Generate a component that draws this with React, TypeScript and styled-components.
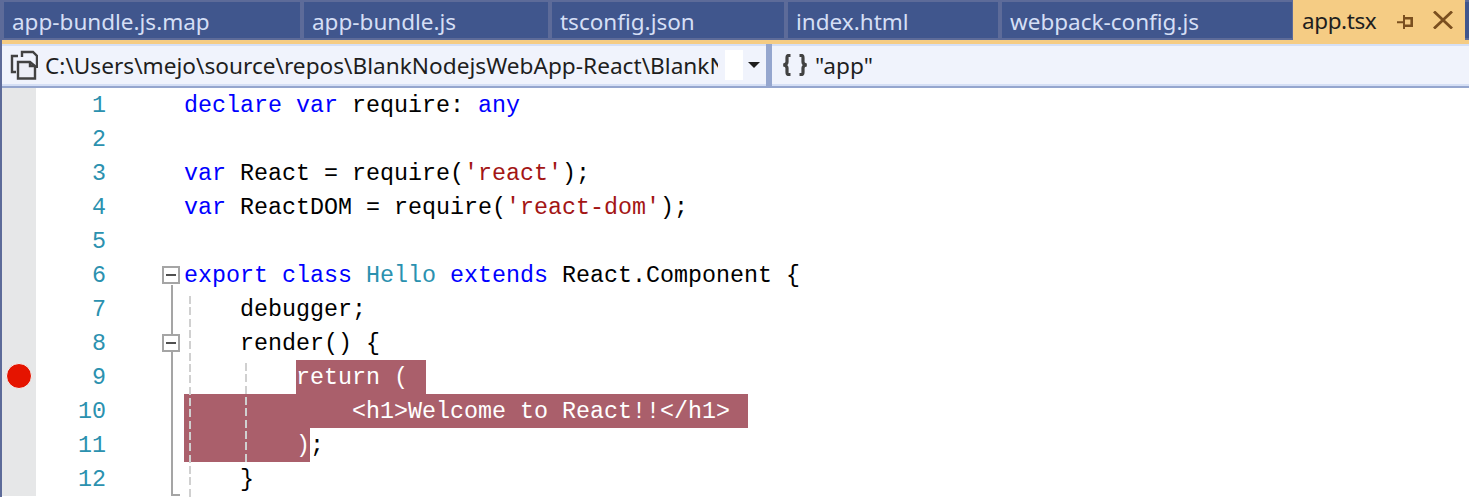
import React from 'react';
import styled, { createGlobalStyle } from 'styled-components';

const Global = createGlobalStyle`
  html, body { margin: 0; padding: 0; background: #fff; overflow: hidden; }
`;

const Page = styled.div`
  width: 1469px;
  height: 497px;
  overflow: hidden;
  display: flex;
  flex-direction: column;
  background: #5d6b99;
`;

const TabBar = styled.div`
  display: flex;
  align-items: stretch;
  height: 40px;
  flex: none;
  padding-left: 4px;
  gap: 4px;
`;

const Tab = styled.div<{ $w: number }>`
  width: ${p => p.$w}px;
  box-sizing: border-box;
  margin: 2px 0;
  padding: 4px 0 0 8px;
  background: #40568d;
  color: #d5dff5;
  font: 22.5px/32px "Noto Sans", sans-serif;
  white-space: nowrap;
`;

const ActiveTab = styled.div`
  width: 172px;
  margin-left: -3px;
  box-sizing: border-box;
  padding: 0 0 0 9px;
  background: #f5cc84;
  color: #1e1e1e;
  display: flex;
  align-items: center;
  letter-spacing: -0.4px;
  font: 22.5px/45px "Noto Sans", sans-serif;
`;

const TabIcons = styled.div`
  display: flex;
  align-items: center;
  margin-left: 21px;
  gap: 18px;
  height: 40px;
`;

const TabEnd = styled.div`
  flex: 1;
  margin: 2px 0 2px -4px;
  background: #40568d;
`;

const GoldLine = styled.div`
  height: 4px;
  flex: none;
  margin-left: 2px;
  background: #f5cc84;
`;

const NavBar = styled.div`
  height: 44px;
  flex: none;
  display: flex;
  box-sizing: border-box;
  background: #f0f3fc;
  box-shadow: inset 0 2px 0 #d5dff5, inset 0 -2px 0 #d5dff5;
  border-bottom: 2px solid #95a6ce;
  color: #1e1e1e;
  font: 22.65px/40px "Noto Sans", sans-serif;
  margin-left: 2px;
`;

const NavLeft = styled.div`
  width: 764px;
  display: flex;
  align-items: center;
  flex: none;
  border-right: 6px solid #95a6ce;
`;

const NavIconBox = styled.div`
  width: 43px;
  flex: none;
  display: flex;
  padding-left: 8px;
  box-sizing: border-box;
`;

const PathText = styled.div`
  width: 673px;
  padding-top: 2px;
  overflow: hidden;
  white-space: nowrap;
  flex: none;
`;

const WhiteGap = styled.div`
  width: 18px;
  height: 30px;
  background: #fff;
  margin-left: 7px;
  flex: none;
`;

const Caret = styled.div`
  margin-left: 5px;
  flex: none;
  width: 0;
  height: 0;
  border-left: 6px solid transparent;
  border-right: 6px solid transparent;
  border-top: 6px solid #1e1e1e;
`;

const NavRight = styled.div`
  flex: 1;
  display: flex;
  align-items: center;
  padding-left: 10px;
  gap: 7px;
`;

const SymbolText = styled.span`
  padding-top: 2px;
`;

const Editor = styled.div`
  flex: 1;
  position: relative;
  background: #fff;
  border-left: 2px solid #5d6b99;
  overflow: hidden;
`;

const Row = styled.div`
  display: flex;
  height: 34px;
`;

const Glyph = styled.div`
  width: 34px;
  flex: none;
  background: #e6e7e8;
  display: flex;
  align-items: center;
  justify-content: center;
`;

const Breakpoint = styled.div`
  width: 26px;
  height: 26px;
  margin-bottom: 3px;
  box-sizing: border-box;
  border-radius: 50%;
  background: #e51400;
  border: 1.5px solid #f5f5f5;
`;

const Num = styled.div`
  width: 70px;
  flex: none;
  text-align: right;
  color: #2b91af;
  font: 23.33px/36px "Liberation Mono", monospace;
`;

const FoldCell = styled.div<{ $top: boolean; $bottom: boolean }>`
  width: 78px;
  flex: none;
  position: relative;
  &::before {
    content: '';
    display: ${p => (p.$top ? 'block' : 'none')};
    position: absolute;
    left: 65px;
    top: 0;
    height: ${p => (p.$bottom ? '34px' : '32px')};
    width: 2px;
    background: #a5a5a5;
  }
  &::after {
    content: '';
    display: ${p => (p.$bottom ? 'block' : 'none')};
    position: absolute;
    left: 65px;
    top: 27px;
    height: 7px;
    width: 2px;
    background: #a5a5a5;
  }
`;

const FoldBox = styled.div`
  position: absolute;
  left: 56px;
  top: 8px;
  width: 18px;
  height: 18px;
  box-sizing: border-box;
  border: 2px solid #a5a5a5;
  background: #fff;
  display: flex;
  align-items: center;
  justify-content: center;
  z-index: 1;
  &::before {
    content: '';
    width: 10px;
    height: 2px;
    background: #505050;
  }
`;

const FoldTick = styled.div`
  position: absolute;
  left: 65px;
  top: 32px;
  width: 9px;
  height: 2px;
  background: #a5a5a5;
`;

const Code = styled.div`
  flex: 1;
  white-space: pre;
  color: #000;
  font: 23.33px/36px "Liberation Mono", monospace;
`;

const Kw = styled.span`color: #0000ff;`;
const Type = styled.span`color: #2b91af;`;
const Str = styled.span`color: #a31515;`;
const Hl = styled.span<{ $pad: number }>`
  display: inline-block;
  height: 34px;
  vertical-align: top;
  background: #aa5f6b;
  color: #fff;
  padding-right: ${p => p.$pad}px;
`;

const Guide = styled.div<{ $x: number; $top: number; $h: number }>`
  position: absolute;
  left: ${p => p.$x}px;
  top: ${p => p.$top}px;
  height: ${p => p.$h}px;
  width: 2px;
  background-image: repeating-linear-gradient(to bottom, #d0d0d0 0 8px, transparent 8px 11.33px);
`;

const PinIcon = () => (
  <svg width="18" height="18" viewBox="0 0 18 18" style={{ display: 'block' }}>
    <path d="M0 11.3H6M7 4V18" stroke="#7a4f1f" strokeWidth="2" fill="none" />
    <path d="M7 7.3H14.7V14.7H7" stroke="#7a4f1f" strokeWidth="2.6" fill="none" />
  </svg>
);

const CloseIcon = () => (
  <svg width="20" height="18" viewBox="0 0 20 18" style={{ display: 'block' }}>
    <path d="M1 0.5L19 17.5M19 0.5L1 17.5" stroke="#7a4f1f" strokeWidth="2.8" fill="none" />
  </svg>
);

const DocIcon = () => (
  <svg width="28" height="30" viewBox="0 0 28 30" fill="none" stroke="#424242" strokeWidth="2.4" style={{ display: 'block' }}>
    <path d="M8 6H2V22H6" />
    <path d="M12 7V2H23L27 6V18" />
    <path d="M8 12H20L25 16V28.5H8Z" fill="#eceef6" />
    <path d="M20 12V16H25" />
  </svg>
);

const Braces = () => (
  <svg width="26" height="22" viewBox="0 0 26 22" fill="none" stroke="#424242" strokeWidth="3.2" style={{ display: 'block' }}>
    <path d="M8.5 1.5H6.5C5 1.5 5 2.5 5 4V8C5 9.5 4 10.5 1.5 11C4 11.5 5 12.5 5 14V18C5 19.5 5 20.5 6.5 20.5H8.5" />
    <path d="M17.5 1.5H19.5C21 1.5 21 2.5 21 4V8C21 9.5 22 10.5 24.5 11C22 11.5 21 12.5 21 14V18C21 19.5 21 20.5 19.5 20.5H17.5" />
  </svg>
);

type LineDef = {
  n: number;
  fold?: 'open' | 'line' | 'nested' | 'end';
  bp?: boolean;
  code: React.ReactNode;
};

const lines: LineDef[] = [
  { n: 1, code: <><Kw>declare</Kw> <Kw>var</Kw> require: <Kw>any</Kw></> },
  { n: 2, code: '' },
  { n: 3, code: <><Kw>var</Kw> React = require(<Str>'react'</Str>);</> },
  { n: 4, code: <><Kw>var</Kw> ReactDOM = require(<Str>'react-dom'</Str>);</> },
  { n: 5, code: '' },
  { n: 6, fold: 'open', code: <><Kw>export</Kw> <Kw>class</Kw> <Type>Hello</Type> <Kw>extends</Kw> React.Component {'{'}</> },
  { n: 7, fold: 'line', code: '    debugger;' },
  { n: 8, fold: 'nested', code: '    render() {' },
  { n: 9, fold: 'line', bp: true, code: <>{'        '}<Hl $pad={4}>return ( </Hl></> },
  { n: 10, fold: 'line', code: <Hl $pad={4}>{'            <h1>Welcome to React!!</h1> '}</Hl> },
  { n: 11, fold: 'line', code: <><Hl $pad={0}>{'        )'}</Hl>;</> },
  { n: 12, fold: 'end', code: '    }' },
];

export default function App() {
  return (
    <Page>
      <Global />
      <TabBar>
        <Tab $w={296}>app-bundle.js.map</Tab>
        <Tab $w={244}>app-bundle.js</Tab>
        <Tab $w={232}>tsconfig.json</Tab>
        <Tab $w={210}>index.html</Tab>
        <Tab $w={290}>webpack-config.js</Tab>
        <ActiveTab>
          app.tsx
          <TabIcons>
            <PinIcon />
            <CloseIcon />
          </TabIcons>
        </ActiveTab>
        <TabEnd />
      </TabBar>
      <GoldLine />
      <NavBar>
        <NavLeft>
          <NavIconBox><DocIcon /></NavIconBox>
          <PathText>C:\Users\mejo\source\repos\BlankNodejsWebApp-React\BlankN</PathText>
          <WhiteGap />
          <Caret />
        </NavLeft>
        <NavRight>
          <Braces />
          <SymbolText>"app"</SymbolText>
        </NavRight>
      </NavBar>
      <Editor>
        {lines.map(l => (
          <Row key={l.n}>
            <Glyph>{l.bp && <Breakpoint />}</Glyph>
            <Num>{l.n}</Num>
            <FoldCell $top={l.fold === 'line' || l.fold === 'nested' || l.fold === 'end'} $bottom={l.fold !== undefined && l.fold !== 'end'}>
              {(l.fold === 'open' || l.fold === 'nested') && <FoldBox />}
              {l.fold === 'end' && <FoldTick />}
            </FoldCell>
            <Code>{l.code}</Code>
          </Row>
        ))}
        <Guide $x={187} $top={208} $h={201} />
        <Guide $x={243} $top={275} $h={99} />
      </Editor>
    </Page>
  );
}
